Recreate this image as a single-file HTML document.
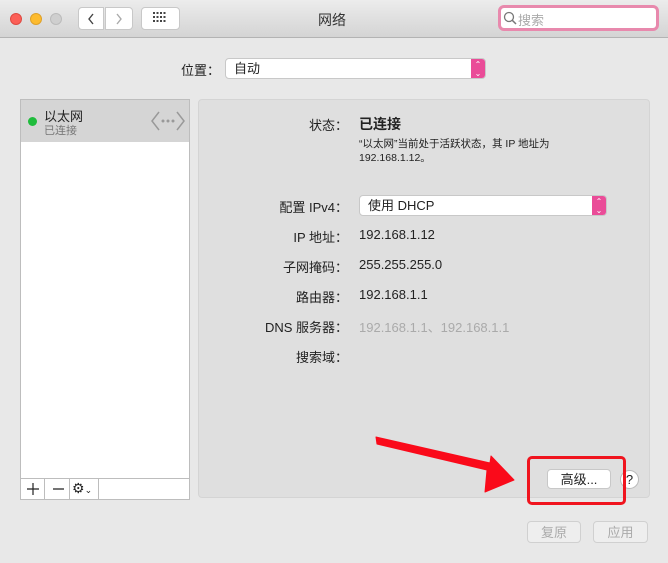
<!DOCTYPE html>
<html><head><meta charset="utf-8"><style>
body{margin:0;width:668px;height:563px;background:#e8e8e8;font-family:"Liberation Sans","Noto Sans CJK SC",sans-serif;font-size:13px;color:#222;position:relative;overflow:hidden}
.a{position:absolute}
.tb{left:0;top:0;width:668px;height:37px;background:linear-gradient(#ececec,#d4d4d4);border-bottom:1px solid #b3b3b3}
.dot{width:12px;height:12px;border-radius:50%;top:13px}
.btn{background:#fff;border:1px solid #c8c8c8;border-radius:4px;box-sizing:border-box}
.lbl{text-align:right;width:120px;left:228px}
.val{left:359px}
.sel span{position:absolute;left:8px;top:0;line-height:19px}
</style></head><body>
<div class="a tb"></div>
<div class="a dot" style="left:10px;background:#fc5f57;border:1px solid #de4a42;box-sizing:border-box"></div>
<div class="a dot" style="left:30px;background:#fdbb2e;border:1px solid #dea12a;box-sizing:border-box"></div>
<div class="a dot" style="left:50px;background:#cfcfcf;border:1px solid #bbb;box-sizing:border-box"></div>
<div class="a btn" style="left:78px;top:7px;width:26px;height:23px;border-radius:4px 0 0 4px"></div>
<svg class="a" style="left:86px;top:12px" width="10" height="14"><path d="M7 2 L3 7 L7 12" fill="none" stroke="#444" stroke-width="1.4"/></svg>
<div class="a btn" style="left:105px;top:7px;width:28px;height:23px;border-radius:0 4px 4px 0"></div>
<svg class="a" style="left:114px;top:12px" width="10" height="14"><path d="M3 2 L7 7 L3 12" fill="none" stroke="#aaa" stroke-width="1.4"/></svg>
<div class="a btn" style="left:141px;top:7px;width:39px;height:23px"></div>
<svg class="a" style="left:153px;top:12px" width="16" height="12"><g fill="#444">
<rect x="0" y="0" width="2" height="2"/><rect x="3.5" y="0" width="2" height="2"/><rect x="7" y="0" width="2" height="2"/><rect x="10.5" y="0" width="2" height="2"/>
<rect x="0" y="4" width="2" height="2"/><rect x="3.5" y="4" width="2" height="2"/><rect x="7" y="4" width="2" height="2"/><rect x="10.5" y="4" width="2" height="2"/>
<rect x="0" y="8" width="2" height="2"/><rect x="3.5" y="8" width="2" height="2"/><rect x="7" y="8" width="2" height="2"/><rect x="10.5" y="8" width="2" height="2"/></g></svg>
<div class="a" style="left:318px;top:10px;font-size:14px;color:#333">网络</div>
<div class="a" style="left:498px;top:5px;width:161px;height:26px;border:3px solid #e889ad;border-radius:6px;background:#fff;box-sizing:border-box"></div>
<svg class="a" style="left:503px;top:11px" width="14" height="14"><circle cx="6" cy="6" r="4.5" fill="none" stroke="#777" stroke-width="1.3"/><line x1="9.3" y1="9.3" x2="13" y2="13" stroke="#777" stroke-width="1.5"/></svg>
<div class="a" style="left:518px;top:10px;color:#aaa">搜索</div>

<div class="a" style="left:181px;top:60px">位置：</div>
<div class="a btn sel" style="left:225px;top:58px;width:261px;height:21px;border-radius:4px;overflow:hidden"><span>自动</span><div style="position:absolute;right:0;top:0;width:14px;height:21px;background:#ea4c98;color:#fff;font-size:8px;line-height:9px;text-align:center;padding-top:1px">⌃<br>⌄</div></div>

<div class="a" style="left:20px;top:99px;width:168px;height:399px;background:#fff;border:1px solid #bdbdbd"></div>
<div class="a" style="left:21px;top:100px;width:168px;height:42px;background:#d5d5d5"></div>
<div class="a" style="left:28px;top:117px;width:9px;height:9px;border-radius:50%;background:#1fbc3c"></div>
<div class="a" style="left:44px;top:106px;font-size:13px">以太网</div>
<div class="a" style="left:44px;top:122px;font-size:11px;color:#777">已连接</div>
<svg class="a" style="left:150px;top:110px" width="36" height="22"><path d="M9 2 L2 11 L9 20 M27 2 L34 11 L27 20" fill="none" stroke="#999" stroke-width="1.5"/><circle cx="13" cy="11" r="1.5" fill="#999"/><circle cx="18" cy="11" r="1.5" fill="#999"/><circle cx="23" cy="11" r="1.5" fill="#999"/></svg>
<div class="a" style="left:21px;top:478px;width:168px;height:20px;border-top:1px solid #bdbdbd;background:#fff"></div>
<div class="a" style="left:44px;top:478px;width:1px;height:21px;background:#bdbdbd"></div>
<div class="a" style="left:69px;top:478px;width:1px;height:21px;background:#bdbdbd"></div>
<div class="a" style="left:98px;top:478px;width:1px;height:21px;background:#bdbdbd"></div>
<svg class="a" style="left:21px;top:479px" width="80" height="20"><path d="M12 4 V16 M6 10 H18 M32 10 H43" stroke="#222" stroke-width="1.2"/></svg>
<div class="a" style="left:72px;top:480px;font-size:14px;line-height:16px">⚙<span style="font-size:9px">⌄</span></div>

<div class="a" style="left:198px;top:99px;width:452px;height:399px;background:#dfdfdf;border:1px solid #d4d4d4;border-radius:4px;box-sizing:border-box"></div>
<div class="a lbl" style="top:115px">状态：</div>
<div class="a val" style="top:114px;font-size:14px;font-weight:bold">已连接</div>
<div class="a val" style="top:137px;font-size:10.5px;line-height:14px">“以太网”当前处于活跃状态，其 IP 地址为<br>192.168.1.12。</div>
<div class="a lbl" style="top:197px">配置 IPv4：</div>
<div class="a btn sel" style="left:359px;top:195px;width:248px;height:21px;overflow:hidden"><span>使用 DHCP</span><div style="position:absolute;right:0;top:0;width:14px;height:21px;background:#ea4c98;color:#fff;font-size:8px;line-height:9px;text-align:center;padding-top:1px">⌃<br>⌄</div></div>
<div class="a lbl" style="top:227px">IP 地址：</div><div class="a val" style="top:227px">192.168.1.12</div>
<div class="a lbl" style="top:257px">子网掩码：</div><div class="a val" style="top:257px">255.255.255.0</div>
<div class="a lbl" style="top:287px">路由器：</div><div class="a val" style="top:287px">192.168.1.1</div>
<div class="a lbl" style="top:317px">DNS 服务器：</div><div class="a val" style="top:317px;color:#aaa">192.168.1.1、192.168.1.1</div>
<div class="a lbl" style="top:347px">搜索域：</div>

<div class="a btn" style="left:547px;top:469px;width:64px;height:20px;text-align:center;line-height:19px">高级...</div>
<div class="a" style="left:620px;top:470px;width:19px;height:19px;border-radius:50%;background:#fff;border:1px solid #bbb;box-sizing:border-box;text-align:center;line-height:17px;font-size:13px">?</div>
<div class="a" style="left:527px;top:456px;width:99px;height:49px;border:3px solid #f0141e;border-radius:5px;box-sizing:border-box"></div>
<svg class="a" style="left:0;top:0" width="668" height="563"><path d="M376 437 L377 444 L487 470 L485 492 L514 480 L491 456 L490 463 Z" fill="#fa0a1a" stroke="#fa0a1a" stroke-width="1" stroke-linejoin="round"/></svg>

<div class="a btn" style="left:527px;top:521px;width:54px;height:22px;text-align:center;line-height:21px;color:#aaa;background:#eee;border-color:#d0d0d0">复原</div>
<div class="a btn" style="left:593px;top:521px;width:55px;height:22px;text-align:center;line-height:21px;color:#aaa;background:#eee;border-color:#d0d0d0">应用</div>
</body></html>
